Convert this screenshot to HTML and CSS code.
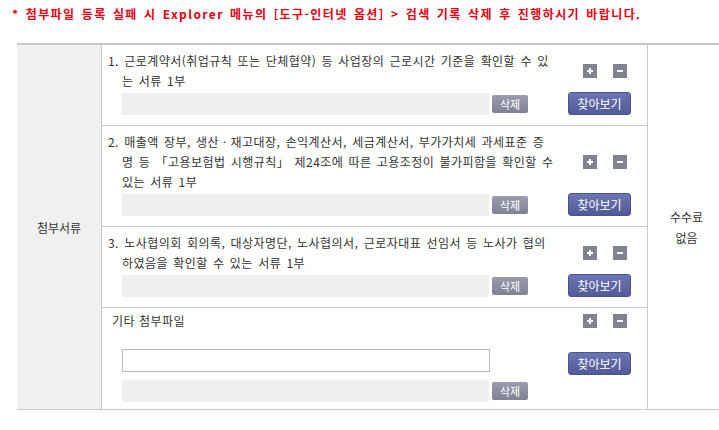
FILE: index.html
```html
<!DOCTYPE html>
<html lang="ko">
<head>
<meta charset="utf-8">
<title>첨부서류</title>
<link rel="stylesheet" href="styles.css">
</head>
<body>
<p class="notice">* 첨부파일 등록 실패 시 Explorer 메뉴의 [도구-인터넷 옵션] &gt; 검색 기록 삭제 후 진행하시기 바랍니다.</p>
<div class="attach">
  <div class="attach-head">첨부서류</div>
  <div class="attach-list">
    <div class="item">
      <p class="desc">1. 근로계약서(취업규칙 또는 단체협약) 등 사업장의 근로시간 기준을 확인할 수 있<br>는 서류 1부</p>
      <div class="pm">
        <svg class="ico" viewBox="0 0 14 14"><rect width="14" height="14" fill="#7f838f"/><path d="M6 4h2v2h2v2H8v2H6V8H4V6h2z" fill="#fff"/></svg>
        <svg class="ico" viewBox="0 0 14 14"><rect width="14" height="14" fill="#7f838f"/><rect x="4" y="6" width="6" height="2" fill="#fff"/></svg>
      </div>
      <div class="fileline"><span class="field"></span><button class="btn-del">삭제</button></div>
      <button class="btn-browse">찾아보기</button>
    </div>
    <div class="item">
      <p class="desc">2. 매출액 장부, 생산ㆍ재고대장, 손익계산서, 세금계산서, 부가가치세 과세표준 증<br>명 등 「고용보험법 시행규칙」 제24조에 따른 고용조정이 불가피함을 확인할 수<br>있는 서류 1부</p>
      <div class="pm">
        <svg class="ico" viewBox="0 0 14 14"><rect width="14" height="14" fill="#7f838f"/><path d="M6 4h2v2h2v2H8v2H6V8H4V6h2z" fill="#fff"/></svg>
        <svg class="ico" viewBox="0 0 14 14"><rect width="14" height="14" fill="#7f838f"/><rect x="4" y="6" width="6" height="2" fill="#fff"/></svg>
      </div>
      <div class="fileline"><span class="field"></span><button class="btn-del">삭제</button></div>
      <button class="btn-browse">찾아보기</button>
    </div>
    <div class="item">
      <p class="desc">3. 노사협의회 회의록, 대상자명단, 노사협의서, 근로자대표 선임서 등 노사가 협의<br>하였음을 확인할 수 있는 서류 1부</p>
      <div class="pm">
        <svg class="ico" viewBox="0 0 14 14"><rect width="14" height="14" fill="#7f838f"/><path d="M6 4h2v2h2v2H8v2H6V8H4V6h2z" fill="#fff"/></svg>
        <svg class="ico" viewBox="0 0 14 14"><rect width="14" height="14" fill="#7f838f"/><rect x="4" y="6" width="6" height="2" fill="#fff"/></svg>
      </div>
      <div class="fileline"><span class="field"></span><button class="btn-del">삭제</button></div>
      <button class="btn-browse">찾아보기</button>
    </div>
    <div class="item item-etc">
      <p class="label">기타 첨부파일</p>
      <div class="pm">
        <svg class="ico" viewBox="0 0 14 14"><rect width="14" height="14" fill="#7f838f"/><path d="M6 4h2v2h2v2H8v2H6V8H4V6h2z" fill="#fff"/></svg>
        <svg class="ico" viewBox="0 0 14 14"><rect width="14" height="14" fill="#7f838f"/><rect x="4" y="6" width="6" height="2" fill="#fff"/></svg>
      </div>
      <input class="file-input" type="text">
      <button class="btn-browse">찾아보기</button>
      <div class="fileline"><span class="field"></span><button class="btn-del">삭제</button></div>
    </div>
  </div>
  <div class="attach-fee">수수료<br>없음</div>
</div>
</body>
</html>
```
FILE: styles.css
```css
html, body {
  overflow: hidden;
}
body {
  margin: 0;
  font-family: "Noto Sans CJK KR", "Noto Sans", sans-serif;
  font-size: 12px;
  color: #333;
  background: #fff;
}
.notice {
  margin: 6px 0 0 12px;
  line-height: 16px;
  color: #e60012;
  font-weight: bold;
  letter-spacing: 1.4px;
  word-spacing: 1.5px;
  white-space: nowrap;
}
.attach {
  margin: 21px 0 0 17px;
  width: 708px;
  display: grid;
  grid-template-columns: 85px 546px 77px;
  border-top: 2px solid #c8c8c8;
  border-bottom: 1px solid #c8c8c8;
}
.attach-head {
  background: #f0f0f0;
  border-right: 1px solid #c8c8c8;
  display: flex;
  align-items: center;
  justify-content: center;
}
.attach-list {
  border-right: 1px solid #c8c8c8;
}
.attach-fee {
  display: flex;
  align-items: center;
  justify-content: center;
  text-align: center;
  line-height: 21px;
}
.item {
  display: grid;
  grid-template-columns: 454px 1fr;
  row-gap: 1px;
  padding: 6px 0 10px 6px;
  border-bottom: 1px solid #c8c8c8;
}
.item:last-child {
  border-bottom: none;
}
.desc {
  margin: 0;
  padding-left: 14px;
  text-indent: -14px;
  line-height: 20px;
  letter-spacing: 0.45px;
  word-spacing: 1.5px;
  white-space: nowrap;
}
.label {
  margin: 0;
  padding-left: 4px;
  line-height: 20px;
  letter-spacing: 0.5px;
}
.pm {
  display: flex;
  gap: 16px;
  align-self: center;
  margin-left: 21px;
}
.ico {
  width: 14px;
  height: 14px;
  display: block;
}
.fileline {
  display: flex;
  align-items: center;
  gap: 3px;
  margin-left: 14px;
}
.field {
  width: 367px;
  height: 22px;
  background: #efefef;
}
.btn-del {
  width: 36px;
  height: 18px;
  padding: 0;
  border: none;
  border-radius: 2px;
  background: linear-gradient(#9b9dae, #7f8295);
  color: #fff;
  font-family: inherit;
  font-size: 11px;
  line-height: 18px;
}
.btn-browse {
  align-self: center;
  justify-self: start;
  margin-left: 6px;
  width: 63px;
  height: 23px;
  padding: 0;
  border: 1px solid #4c5391;
  border-radius: 3px;
  background: linear-gradient(#6d75b4, #525997);
  color: #fff;
  font-family: inherit;
  font-size: 12px;
  line-height: 21px;
}
.item-etc {
  padding: 3px 0 7px 6px;
  row-gap: 0;
}
.file-input {
  margin: 18px 0 0 14px;
  width: 368px;
  height: 23px;
  box-sizing: border-box;
  border: 1px solid #bbb;
  padding: 0 4px;
  font-family: inherit;
}
.item-etc .btn-browse {
  margin-top: 21px;
}
.item-etc .fileline {
  margin-top: 5px;
}
```
